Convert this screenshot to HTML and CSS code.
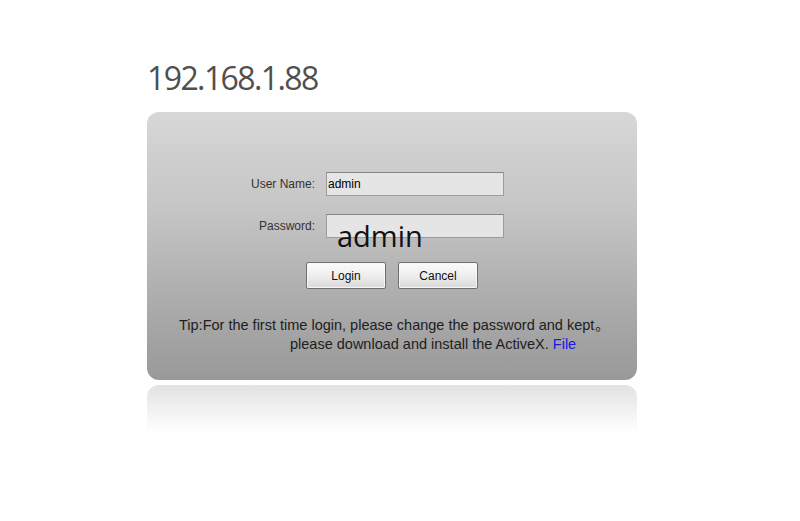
FILE: index.html
```html
<!DOCTYPE html>
<html>
<head>
<meta charset="utf-8">
<link rel="stylesheet" href="styles.css">
</head>
<body>
<div class="page">
  <h1 class="title">192.168.1.88</h1>
  <div class="panel">
    <div class="form">
      <label class="label">User Name:</label>
      <div class="field"><input class="input" type="text" value="admin"></div>
      <label class="label">Password:</label>
      <div class="field">
        <input class="input" type="password" value="">
        <span class="overlay">admin</span>
      </div>
    </div>
    <div class="buttons">
      <button class="btn">Login</button>
      <button class="btn">Cancel</button>
    </div>
    <div class="tip">
      <div class="tip-line">Tip:For the first time login, please change the password and kept<span class="cjk">。</span></div>
      <div class="tip-line tip-indent">please download and install the ActiveX. <a class="file" href="#">File</a></div>
    </div>
  </div>
  <div class="reflection"></div>
</div>
</body>
</html>
```
FILE: styles.css
```css
html, body {
  margin: 0;
  padding: 0;
  background: #ffffff;
}
.page {
  padding: 58px 0 0 147px;
  font-family: "Liberation Sans", Arial, sans-serif;
}
.title {
  margin: 0 0 14px 0;
  font-family: "Open Sans", "Noto Sans", sans-serif;
  font-weight: 400;
  font-size: 32px;
  line-height: 40px;
  letter-spacing: -1.6px;
  color: #505050;
}
.panel {
  width: 490px;
  height: 268px;
  box-sizing: border-box;
  padding-top: 60px;
  border-radius: 12px;
  background: linear-gradient(#d7d7d7 0%, #c6c6c6 35%, #a9a9a9 75%, #999999 100%);
}
.form {
  display: grid;
  grid-template-columns: 168px 178px;
  column-gap: 11px;
  row-gap: 18px;
  align-items: center;
}
.label {
  text-align: right;
  font-size: 12px;
  color: #333333;
}
.field {
  position: relative;
  height: 24px;
}
.input {
  box-sizing: border-box;
  width: 178px;
  height: 24px;
  margin: 0;
  padding: 0 1px;
  border: 1px solid #9c9c9c;
  border-top-color: #858585;
  background: #e5e5e5;
  font-family: "Liberation Sans", Arial, sans-serif;
  font-size: 12px;
  color: #000000;
  outline: none;
}
.overlay {
  position: absolute;
  left: 11px;
  top: 7px;
  font-family: "Open Sans", "Noto Sans", sans-serif;
  font-size: 29px;
  line-height: 29px;
  color: #111111;
  white-space: nowrap;
}
.buttons {
  display: flex;
  justify-content: center;
  gap: 12px;
  margin-top: 24px;
}
.btn {
  width: 80px;
  height: 27px;
  margin: 0;
  padding: 0;
  border: 1px solid #6f6f6f;
  border-radius: 2px;
  background: linear-gradient(#fbfbfb 0%, #eeeeee 50%, #d9d9d9 100%);
  box-shadow: inset 0 0 0 1px #f7f7f7;
  font-family: "Liberation Sans", Arial, sans-serif;
  font-size: 12px;
  color: #111111;
}
.tip {
  margin-top: 26px;
  padding-left: 32px;
  font-size: 14.5px;
  line-height: 19px;
  color: #202020;
}
.tip-indent {
  padding-left: 111px;
}
.cjk {
  font-family: "Noto Sans CJK SC", sans-serif;
  font-size: 14px;
  line-height: 19px;
  margin-left: 1px;
}
.file {
  color: #1a1ae6;
  text-decoration: none;
}
.reflection {
  width: 490px;
  height: 48px;
  margin-top: 5px;
  border-radius: 12px 12px 0 0;
  background: linear-gradient(#e2e2e2 0%, #eeeeee 40%, #ffffff 100%);
}
```
